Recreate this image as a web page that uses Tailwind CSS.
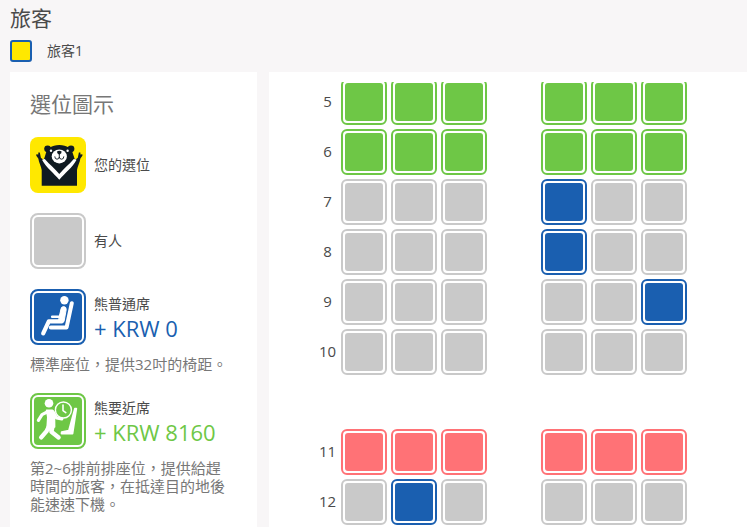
<!DOCTYPE html>
<html lang="zh-Hant">
<head>
    <meta charset="UTF-8">
    <meta name="viewport" content="width=device-width, initial-scale=1.0">
    <title>選擇座位</title>
    <script src="https://cdn.jsdelivr.net/npm/@tailwindcss/browser@4"></script>
</head>
<body class="h-screen overflow-hidden flex flex-col bg-[#f8f6f7] text-[#4a4a4a] font-['Open_Sans','Noto_Sans_CJK_TC',sans-serif]">
    <header class="px-[10px] pt-1">
        <h1 class="text-[21px] leading-7">旅客</h1>
        <div class="flex items-center gap-[15px] mt-2 mb-[10px]">
            <span class="size-[22px] rounded-[3px] border-2 border-[#1a5fb0] bg-[#ffe800]"></span>
            <span class="text-sm leading-[22px]">旅客1</span>
        </div>
    </header>

    <main class="flex flex-1 min-h-0 gap-3 pl-[10px]">
        <!-- Leyenda -->
        <aside class="w-[247px] shrink-0 bg-white px-5 pt-[18px] overflow-hidden">
            <h2 class="text-[21px] leading-7 text-[#777]">選位圖示</h2>

            <div class="flex items-center gap-2 mt-[19px]">
                <svg class="size-14 shrink-0" viewBox="0 0 56 56">
                    <rect width="56" height="56" rx="8" fill="#ffe800"/>
                    <g fill="#101b22">
                        <circle cx="17.6" cy="11.8" r="3.4"/>
                        <circle cx="41" cy="11.8" r="3.4"/>
                        <path d="M29.3 8C37 8 42 11.6 43.2 17.5L45 23 47.8 20.8 48.9 15.6 50.4 15.4 50.4 17.4 52.4 17.2 52.4 18.7 50.4 21.4C49.9 25.5 47.3 29.5 47 33V48.8H11.7V33C11.4 29.5 8.8 25.5 8.3 21.4L6.3 18.7 6.3 17.2 8.3 17.4 8.3 15.4 9.8 15.6 10.9 20.8 13.7 23 15.5 17.5C16.7 11.6 21.6 8 29.3 8Z"/>
                    </g>
                    <path d="M12 22.8 14.8 22C19.5 27.5 25 31.6 29.3 37 33.6 31.6 39.1 27.5 43.8 22L46.6 22.8C42 31 35 36 29.3 42.8 23.6 36 16.6 31 12 22.8Z" fill="#fff"/>
                    <ellipse cx="29.3" cy="19.4" rx="7.6" ry="7" fill="#fff"/>
                    <circle cx="21" cy="13.8" r="1.2" fill="#fff"/>
                    <circle cx="37.6" cy="13.8" r="1.2" fill="#fff"/>
                    <path d="M27 14.4Q29.3 13.2 31.6 14.4 32 16.4 29.3 17.8 26.6 16.4 27 14.4Z" fill="#101b22"/>
                    <path d="M29.3 17V20.8M24.8 19.4Q24.8 22.2 27 22.2 29.3 22 29.3 20 29.3 22 31.6 22.2 33.8 22.2 33.8 19.4" fill="none" stroke="#101b22" stroke-width="0.9"/>
                </svg>
                <span class="text-sm">您的選位</span>
            </div>

            <div class="flex items-center gap-2 mt-5">
                <span class="size-14 shrink-0 rounded-lg border-2 border-[#c9c9c9] p-[2px]"><span class="block size-full rounded-[4px] bg-[#c9c9c9]"></span></span>
                <span class="text-sm">有人</span>
            </div>

            <div class="flex items-center gap-2 mt-5">
                <svg class="size-14 shrink-0" viewBox="0 0 56 56">
                    <rect x="1" y="1" width="54" height="54" rx="7" fill="#fff" stroke="#1a5fb0" stroke-width="2"/>
                    <rect x="4" y="4" width="48" height="48" rx="4" fill="#1a5fb0"/>
                    <g fill="none" stroke="#fff" stroke-linecap="round" stroke-linejoin="round">
                        <circle cx="34.4" cy="11.2" r="4.2" fill="#fff" stroke="none"/>
                        <path d="M30.8 20.6Q31 17.6 33.6 17.6 36.4 17.8 36.2 20.6L34 32.6H28.6Z" fill="#fff" stroke-width="1"/>
                        <path d="M31.6 24 30 27.8 22.2 27.8" stroke-width="2.6"/>
                        <path d="M31.8 32.4H18.8L13.2 44.4" stroke-width="4.2"/>
                        <path d="M41.8 14.2 36.6 38.4H20.8" stroke-width="4"/>
                    </g>
                </svg>
                <div class="pt-[2px]">
                    <div class="text-sm">熊普通席</div>
                    <div class="text-[22px] leading-7 text-[#1a5fb0]">+ KRW 0</div>
                </div>
            </div>
            <p class="mt-[10px] pr-2 text-[15px] leading-[18px] text-[#777]">標準座位，提供32吋的椅距。</p>

            <div class="flex items-center gap-2 mt-5">
                <svg class="size-14 shrink-0" viewBox="0 0 56 56">
                    <rect x="1" y="1" width="54" height="54" rx="7" fill="#fff" stroke="#6ec746" stroke-width="2"/>
                    <rect x="4" y="4" width="48" height="48" rx="4" fill="#6ec746"/>
                    <g fill="none" stroke="#fff" stroke-linecap="round" stroke-linejoin="round">
                        <circle cx="33.4" cy="17" r="8" stroke-width="1.4"/>
                        <path d="M33 12V17.6L35.8 19.6" stroke-width="1.6"/>
                        <circle cx="19" cy="10.2" r="4.3" fill="#fff" stroke="none"/>
                        <path d="M16.6 17.4H22.6L24.4 20 24.6 34H17.2L17.8 24Z" fill="#fff" stroke-width="1.6"/>
                        <path d="M17.6 18.8 12 21.6 8.4 27.4M23 19 26.6 25 31.8 26" stroke-width="3.2"/>
                        <path d="M19.4 32.6 16.4 38.4 11.2 44.4M22.6 33 21.4 38.8 28.6 44.4" stroke-width="4.4"/>
                        <path d="M44.8 15.6 46.4 15.6 42.6 40.6H31.4L31.6 39 38.8 37.6Z" fill="#fff" stroke-width="1.6"/>
                    </g>
                </svg>
                <div class="pt-[2px]">
                    <div class="text-sm">熊要近席</div>
                    <div class="text-[22px] leading-7 text-[#6ec746]">+ KRW 8160</div>
                </div>
            </div>
            <p class="mt-[10px] pr-2 text-[15px] leading-[18px] text-[#777]">第2~6排前排座位，提供給趕時間的旅客，在抵達目的地後能速速下機。</p>
        </aside>

        <!-- Mapa de asientos -->
        <section class="flex-1 min-w-0 bg-white pt-[10px] pl-[45px]">
            <div id="seatMap" class="h-full overflow-hidden"></div>
        </section>
    </main>

    <script>
        // g = verde, x = ocupado, b = azul, r = rojo
        const rows = [
            [5, 'ggg', 'ggg'],
            [6, 'ggg', 'ggg'],
            [7, 'xxx', 'bxx'],
            [8, 'xxx', 'bxx'],
            [9, 'xxx', 'xxb'],
            [10, 'xxx', 'xxx'],
            null,
            [11, 'rrr', 'rrr'],
            [12, 'xbx', 'xxx']
        ];
        const borders = { g: 'border-[#6ec746]', x: 'border-[#c9c9c9]', b: 'border-[#1a5fb0]', r: 'border-[#ff7276]' };
        const fills = { g: 'bg-[#6ec746]', x: 'bg-[#c9c9c9]', b: 'bg-[#1a5fb0]', r: 'bg-[#ff7276]' };

        function seat(type, name) {
            return `<button type="button" aria-label="${name}" ${type === 'x' ? 'disabled' : ''}
                class="size-[46px] shrink-0 rounded-md border-2 p-[2px] ${borders[type]}">
                <span class="block size-full rounded-[3px] ${fills[type]}"></span>
            </button>`;
        }

        const seatMap = document.getElementById('seatMap');
        rows.forEach((row, i) => {
            const div = document.createElement('div');
            // la primera fila queda un poco desplazada bajo el borde superior
            div.className = i === 0 ? 'flex items-center gap-1 h-[46px] -mt-[3px] mb-1' : 'flex items-center gap-1 h-[46px] mb-1';
            if (row) {
                const [num, left, right] = row;
                div.innerHTML = `<span class="w-[27px] -mr-1 pb-[2px] shrink-0 text-center text-[15px]">${num}</span>`
                    + [...left].map((t, n) => seat(t, num + 'ABC'[n])).join('')
                    + '<span class="w-[46px] shrink-0"></span>'
                    + [...right].map((t, n) => seat(t, num + 'DEF'[n])).join('');
            }
            seatMap.appendChild(div);
        });
    </script>
</body>
</html>
